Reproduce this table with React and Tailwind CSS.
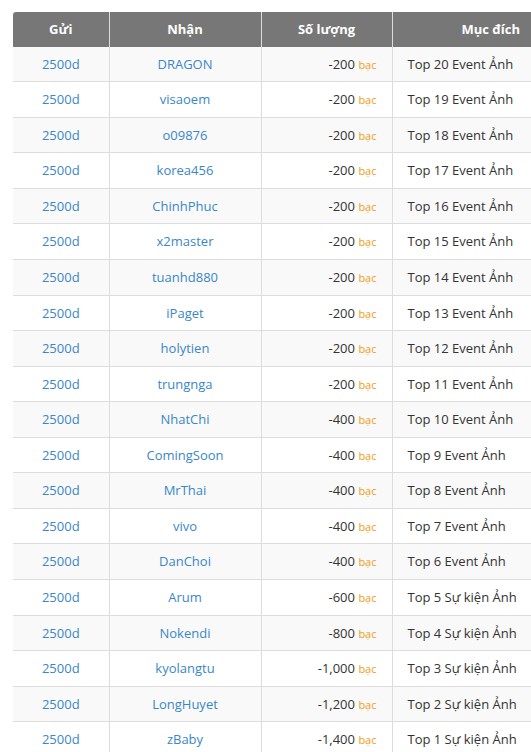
const rows = [
  ["DRAGON", "-200", "Top 20 Event Ảnh"],
  ["visaoem", "-200", "Top 19 Event Ảnh"],
  ["o09876", "-200", "Top 18 Event Ảnh"],
  ["korea456", "-200", "Top 17 Event Ảnh"],
  ["ChinhPhuc", "-200", "Top 16 Event Ảnh"],
  ["x2master", "-200", "Top 15 Event Ảnh"],
  ["tuanhd880", "-200", "Top 14 Event Ảnh"],
  ["iPaget", "-200", "Top 13 Event Ảnh"],
  ["holytien", "-200", "Top 12 Event Ảnh"],
  ["trungnga", "-200", "Top 11 Event Ảnh"],
  ["NhatChi", "-400", "Top 10 Event Ảnh"],
  ["ComingSoon", "-400", "Top 9 Event Ảnh"],
  ["MrThai", "-400", "Top 8 Event Ảnh"],
  ["vivo", "-400", "Top 7 Event Ảnh"],
  ["DanChoi", "-400", "Top 6 Event Ảnh"],
  ["Arum", "-600", "Top 5 Sự kiện Ảnh"],
  ["Nokendi", "-800", "Top 4 Sự kiện Ảnh"],
  ["kyolangtu", "-1,000", "Top 3 Sự kiện Ảnh"],
  ["LongHuyet", "-1,200", "Top 2 Sự kiện Ảnh"],
  ["zBaby", "-1,400", "Top 1 Sự kiện Ảnh"],
];

export default function App() {
  return (
    <div
      className="w-[531px] h-[752px] overflow-hidden bg-white pl-[13px] pt-[12px]"
      style={{ fontFamily: '"Open Sans", "Noto Sans", sans-serif' }}
    >
      <table className="w-[576px] table-fixed border-collapse text-[13px] leading-[1.42857] text-[#333]">
        <colgroup>
          <col className="w-[96px]" />
          <col className="w-[152px]" />
          <col className="w-[131px]" />
          <col className="w-[197px]" />
        </colgroup>
        <thead>
          <tr className="bg-[#777] text-white font-bold">
            <th className="py-2 px-2 text-center rounded-tl-[3px] border-r border-[#ddd]">Gửi</th>
            <th className="py-2 px-2 text-center border-r border-[#ddd]">Nhận</th>
            <th className="py-2 px-2 text-center border-r border-[#ddd]">Số lượng</th>
            <th className="py-2 px-2 text-center">Mục đích</th>
          </tr>
        </thead>
        <tbody>
          {rows.map(([name, amt, purpose], i) => (
            <tr key={i} className={i % 2 === 0 ? "bg-[#f9f9f9]" : "bg-white"}>
              <td className="py-2 px-2 text-center text-[#3a87c8] border-r border-b border-[#ddd]">2500d</td>
              <td className="py-2 px-2 text-center text-[#3a87c8] border-r border-b border-[#ddd]">{name}</td>
              <td className="py-2 pl-2 pr-[15px] text-right border-r border-b border-[#ddd]">
                {amt} <span className="text-[11px] text-[#f39c12]">bạc</span>
              </td>
              <td className="py-2 pl-[15px] pr-2 text-left border-b border-[#ddd] whitespace-nowrap">{purpose}</td>
            </tr>
          ))}
        </tbody>
      </table>
    </div>
  );
}
